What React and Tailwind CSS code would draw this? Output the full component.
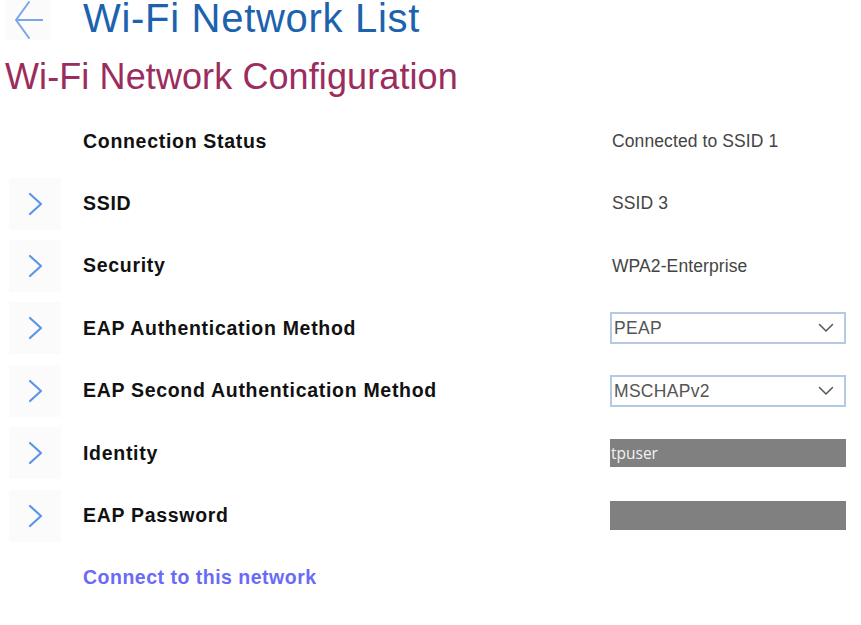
import React from "react";

const Chevron = () => (
  <svg width="18" height="24" viewBox="0 0 18 24" fill="none">
    <path d="M3 2 L14 12 L3 22" stroke="#5b95e8" strokeWidth="2.2" strokeLinecap="round" strokeLinejoin="round" />
  </svg>
);

const Down = () => (
  <svg width="16" height="10" viewBox="0 0 16 10" fill="none">
    <path d="M1.5 1.5 L8 8 L14.5 1.5" stroke="#555" strokeWidth="1.5" strokeLinecap="round" strokeLinejoin="round" />
  </svg>
);

function Row({ chevron = true, label, children }) {
  return (
    <div className="flex items-center h-[62.4px]">
      <div className="w-[83px] flex items-center">
        {chevron ? (
          <div className="ml-[9px] w-[52px] h-[52px] bg-[#fbfbfb] flex items-center justify-center pl-[1px]">
            <Chevron />
          </div>
        ) : null}
      </div>
      <div className="w-[527px] text-[19.5px] font-bold text-[#111] tracking-[0.7px]">{label}</div>
      <div className="w-[236px]">{children}</div>
    </div>
  );
}

const Value = ({ children }) => (
  <div className="pl-[2px] text-[17.5px] text-[#444] tracking-[0.1px]">{children}</div>
);

const Select = ({ value }) => (
  <div className="h-[32px] border-2 border-[#b4c9e4] bg-white flex items-center justify-between pl-[2px] pr-[10px]">
    <span className="text-[17.5px] text-[#555] tracking-[0.3px]">{value}</span>
    <Down />
  </div>
);

export default function App() {
  return (
    <div className="w-[861px] h-[625px] bg-white overflow-hidden" style={{ fontFamily: '"Liberation Sans", Arial, sans-serif' }}>
      <div className="flex items-start h-[42px]">
        <div className="ml-[5px] w-[46px] h-[40px] bg-[#fbfbfb] flex items-center justify-center">
          <svg width="30" height="40" viewBox="0 0 30 40" fill="none">
            <path d="M16 2 L3 20 L16 38 M3 20 L30 20" stroke="#7aa6ea" strokeWidth="2" strokeLinecap="round" strokeLinejoin="round" />
          </svg>
        </div>
        <div className="ml-[32px] text-[40px] leading-[36px] text-[#1c62ad] tracking-[0.7px]">Wi-Fi Network List</div>
      </div>
      <div className="ml-[5px] mt-[17px] text-[36px] leading-none text-[#9b2c5d] tracking-[0.1px]">Wi-Fi Network Configuration</div>
      <div className="mt-[15px]">
        <Row chevron={false} label="Connection Status"><Value>Connected to SSID 1</Value></Row>
        <Row label="SSID"><Value>SSID 3</Value></Row>
        <Row label="Security"><Value>WPA2-Enterprise</Value></Row>
        <Row label="EAP Authentication Method"><Select value="PEAP" /></Row>
        <Row label="EAP Second Authentication Method"><Select value="MSCHAPv2" /></Row>
        <Row label="Identity">
          <div className="h-[28px] bg-[#808080] flex items-center pl-[1px] text-[15.5px] text-[#f2f2f2]" style={{ fontFamily: '"Open Sans", sans-serif' }}>tpuser</div>
        </Row>
        <Row label="EAP Password">
          <div className="h-[29px] bg-[#808080]" />
        </Row>
        <div className="flex items-center h-[62px]">
          <div className="ml-[83px] text-[19.5px] font-bold text-[#6a6af8] tracking-[0.5px]">Connect to this network</div>
        </div>
      </div>
    </div>
  );
}
